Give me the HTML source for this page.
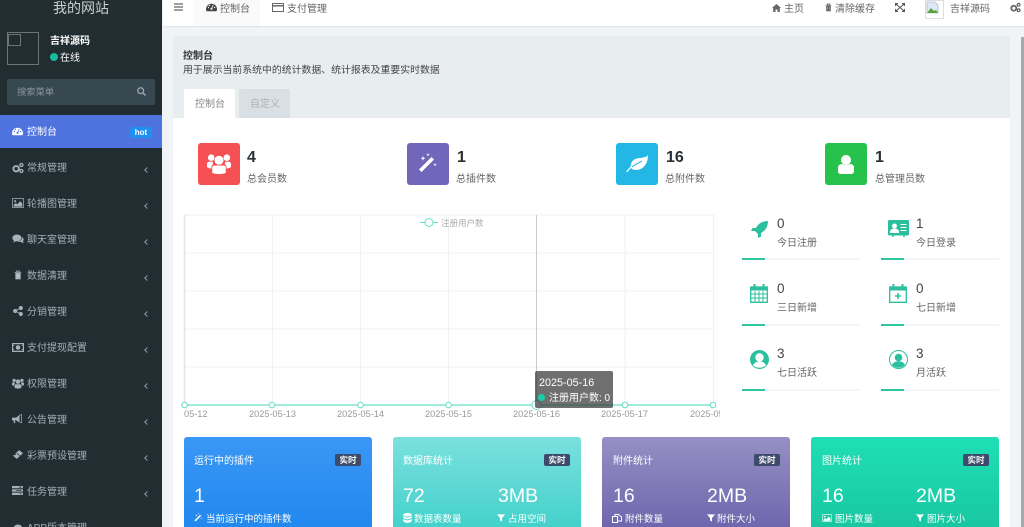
<!DOCTYPE html>
<html lang="zh-CN"><head><meta charset="utf-8"><title>控制台</title>
<style>
html,body{margin:0;padding:0;width:1024px;height:527px;overflow:hidden;background:#f1f4f6;font-family:"Liberation Sans","Noto Sans CJK SC",sans-serif;font-size:10px}
#root{position:relative;width:1024px;height:527px;overflow:hidden;background:#f1f4f6}
.a,.t{position:absolute}
.t{line-height:14px;white-space:nowrap;margin-top:2px}
.num{margin-top:1px}
svg{position:absolute;overflow:visible}
.m{color:#9fb0b8;left:27px;font-size:10px}
.ar{position:absolute;left:145px;width:3px;height:3px;border-left:1px solid #8a9aa2;border-bottom:1px solid #8a9aa2;transform:rotate(45deg)}
.nav{color:#666;font-size:10px}
.card{position:absolute;top:437px;height:100px;border-radius:3px;box-sizing:border-box;color:#fff}
.badge{position:absolute;top:454px;width:26px;height:12px;border-radius:2px;background:#3c4a6b;color:#fff;font-size:8.5px;font-weight:bold;line-height:12px;text-align:center}
.w{color:#fff}.big{font-size:19.5px;line-height:22px;color:#fff;margin-top:1px}
.l{color:#666}.n{color:#444;font-size:13.5px;margin-top:1px}
.hr{position:absolute;height:2px;background:#f5f6f7}.hr i{position:absolute;left:0;top:0;width:23px;height:2px;background:#2ec4a0}
</style></head><body>
<div id="root">
<svg width="0" height="0" style="position:absolute"><defs>
<symbol id="gauge" viewBox="0 3 16 12"><path d="M0 11.500A8 8 0 0 1 16 11.500C16 13 15.500 14 15 14.500H1C.5 14 0 13 0 11.500Z" fill="currentColor"/><path d="M8 11L10.500 5.500" stroke="#fafafa" stroke-width="1.200"/><circle cx="8" cy="11" r="1.500" fill="#fafafa"/><circle cx="3.500" cy="9" r="1" fill="#fafafa"/><circle cx="5" cy="6" r="1" fill="#fafafa"/><circle cx="12.500" cy="9" r="1" fill="#fafafa"/></symbol>
<symbol id="gauge2" viewBox="0 3 16 12"><path d="M0 11.500A8 8 0 0 1 16 11.500C16 13 15.500 14 15 14.500H1C.5 14 0 13 0 11.500Z" fill="currentColor"/><path d="M8 11L10.500 5.500" stroke="#4e73df" stroke-width="1.200"/><circle cx="8" cy="11" r="1.500" fill="#4e73df"/><circle cx="3.500" cy="9" r="1" fill="#4e73df"/><circle cx="5" cy="6" r="1" fill="#4e73df"/><circle cx="12.500" cy="9" r="1" fill="#4e73df"/></symbol>
<symbol id="cogs" viewBox="0 0 16 16"><circle cx="5.500" cy="9" r="3.600" fill="none" stroke="currentColor" stroke-width="2.600"/><circle cx="12.500" cy="4" r="2" fill="none" stroke="currentColor" stroke-width="1.800"/><circle cx="12.500" cy="12" r="2" fill="none" stroke="currentColor" stroke-width="1.800"/></symbol>
<symbol id="img" viewBox="0 0 16 14"><path d="M.5.500h15v13H.5z" fill="none" stroke="currentColor"/><circle cx="4" cy="4.500" r="1.500" fill="currentColor"/><path d="M2 12V9.500L5 7l2 2 4-4.500 3 3V12z" fill="currentColor"/></symbol>
<symbol id="chat" viewBox="0 0 16 14"><ellipse cx="6.500" cy="5.500" rx="6.500" ry="4.800" fill="currentColor"/><path d="M2.500 8L1.500 12 6 9.500z" fill="currentColor"/><path d="M14 4.500c2 1 2.500 3.500 1 5.200L15.800 13 12 11c-2 .5-3.500 0-4.500-.5 3 0 6.500-2 6.500-6z" fill="currentColor"/></symbol>
<symbol id="trash" viewBox="0 0 12 14"><path d="M1 3h10M4 3V1h4v2" fill="none" stroke="currentColor" stroke-width="1.300"/><path d="M2 4h8v9.500H2z" fill="currentColor"/><path d="M4.500 6v5M7.500 6v5" stroke="#fff" stroke-opacity=".5"/></symbol>
<symbol id="share" viewBox="0 0 14 14"><circle cx="3" cy="7" r="2.800" fill="currentColor"/><circle cx="11" cy="2.800" r="2.800" fill="currentColor"/><circle cx="11" cy="11.200" r="2.800" fill="currentColor"/><path d="M3 7l8-4.200M3 7l8 4.200" stroke="currentColor" stroke-width="1.300"/></symbol>
<symbol id="money" viewBox="0 0 16 12"><path d="M.8.800h14.400v10.400H.8z" fill="none" stroke="currentColor" stroke-width="1.600"/><circle cx="8" cy="6" r="3" fill="currentColor"/><path d="M1 3.500h2M13 3.500h2M1 8.500h2M13 8.500h2" stroke="currentColor"/></symbol>
<symbol id="users" viewBox="0 0 16 14"><circle cx="8" cy="4.500" r="3" fill="currentColor"/><circle cx="2.800" cy="2.800" r="2.200" fill="currentColor"/><circle cx="13.200" cy="2.800" r="2.200" fill="currentColor"/><path d="M3.500 13V9.500Q3.500 8 5 8h6q1.500 0 1.500 1.500V13Q8 14.500 3.500 13z" fill="currentColor"/><path d="M0 9V7q0-1.500 1.500-1.500h2.200Q4.500 7 3 8.500V10Q1 10 0 9zM16 9V7q0-1.500-1.500-1.500h-2.200Q11.500 7 13 8.500V10q2 0 3-1z" fill="currentColor"/></symbol>
<symbol id="horn" viewBox="0 0 16 14"><path d="M0 5h6l5-4v11L6 9H4l1 4H3L2 9H0z" fill="currentColor"/><path d="M11 1.500l3-1v12l-3-1" fill="none" stroke="currentColor"/></symbol>
<symbol id="ticket" viewBox="0 0 16 14"><path d="M10 0l6 5-10 9-6-5 1.500-1.500q1.500 1 2.500 0t0-2.500z" fill="currentColor"/><path d="M6 5l5 4" stroke="#222d32" stroke-width="1.200"/></symbol>
<symbol id="tasks" viewBox="0 0 16 13"><path d="M0 0h16v3.300H0zM0 4.800h16v3.300H0zM0 9.600h16V13H0z" fill="currentColor"/><path d="M10 1.600h4M6 6.400h8M11 11.300h3" stroke="#222d32"/></symbol>
<symbol id="funnel" viewBox="0 0 12 12"><path d="M0 .5h12L7.500 6v5.500l-3-2V6z" fill="currentColor"/></symbol>
<symbol id="wand" viewBox="0 0 20 20"><path d="M1 16.500L13.500 4l2.500 2.500L3.500 19z" fill="currentColor"/><path d="M5 3l.7 1.600L7.300 5.300 5.700 6 5 7.600 4.300 6 2.700 5.300 4.300 4.600zM10 0l.5 1.200 1.200.5-1.200.5L10 3.400 9.500 2.200 8.300 1.700 9.500 1.200zM17 10l.5 1.200 1.200.5-1.200.5-.5 1.200-.5-1.200-1.200-.5 1.200-.5z" fill="currentColor"/></symbol>
<symbol id="db" viewBox="0 0 12 14"><ellipse cx="6" cy="2.500" rx="6" ry="2.500" fill="currentColor"/><path d="M0 4q3 2.400 6 2.400T12 4v2.500Q9 9 6 9T0 6.500zM0 8q3 2.400 6 2.400T12 8v3.500Q9 14 6 14T0 11.500z" fill="currentColor"/></symbol>
</defs></svg>

<!-- sidebar -->
<div class="a" style="left:0;top:0;width:162px;height:527px;background:#222d32"></div>
<div class="t" style="left:53px;top:-1px;color:#c8d0d4;font-size:14px">我的网站</div>
<div class="a" style="left:7px;top:32px;width:30px;height:31px;border:1px solid #6d7477"></div>
<div class="a" style="left:8px;top:34px;width:11px;height:10px;border:1px solid #6d7477"></div>
<div class="t" style="left:50px;top:32px;color:#fff;font-weight:bold;margin-top:3px">吉祥源码</div>
<div class="a" style="left:50px;top:53px;width:8px;height:8px;border-radius:50%;background:#18bc9c"></div>
<div class="t" style="left:60px;top:49px;color:#fff;margin-top:3px">在线</div>
<div class="a" style="left:7px;top:79px;width:148px;height:26px;border-radius:2px;background:#374850"></div>
<div class="t" style="left:17px;top:83px;color:#8a979d;font-size:9.300px">搜索菜单</div>
<svg style="left:137px;top:87px;color:#9aa6ab" width="9" height="9" viewBox="0 0 9 9"><circle cx="3.700" cy="3.700" r="2.900" fill="none" stroke="currentColor" stroke-width="1.300"/><path d="M6 6l2.500 2.500" stroke="currentColor" stroke-width="1.500"/></svg>
<div class="a" style="left:0;top:115px;width:162px;height:33px;background:#4e73df"></div>
<svg style="left:12px;top:127px;color:#fff" width="11" height="9"><use href="#gauge2"/></svg>
<div class="t" style="left:27px;top:122px;margin-top:4px;color:#fff">控制台</div>
<div class="a" style="left:130px;top:127px;width:22px;height:11px;border-radius:2px;background:#1e90f0;color:#fff;font-size:8px;font-weight:bold;line-height:11px;text-align:center">hot</div>

<svg style="left:12px;top:162px;color:#a3b3ba" width="12" height="12"><use href="#cogs"/></svg><div class="t m" style="top:160px">常规管理</div><i class="ar" style="top:168px"></i>
<svg style="left:12px;top:198px;color:#a3b3ba" width="12" height="10"><use href="#img"/></svg><div class="t m" style="top:196px">轮播图管理</div><i class="ar" style="top:204px"></i>
<svg style="left:12px;top:234px;color:#a3b3ba" width="12" height="10"><use href="#chat"/></svg><div class="t m" style="top:232px">聊天室管理</div><i class="ar" style="top:240px"></i>
<svg style="left:14px;top:270px;color:#a3b3ba" width="8" height="10"><use href="#trash"/></svg><div class="t m" style="top:268px">数据清理</div><i class="ar" style="top:276px"></i>
<svg style="left:13px;top:306px;color:#a3b3ba" width="10" height="10"><use href="#share"/></svg><div class="t m" style="top:304px">分销管理</div><i class="ar" style="top:312px"></i>
<svg style="left:12px;top:343px;color:#a3b3ba" width="12" height="9"><use href="#money"/></svg><div class="t m" style="top:340px">支付提现配置</div><i class="ar" style="top:348px"></i>
<svg style="left:12px;top:378px;color:#a3b3ba" width="12" height="11"><use href="#users"/></svg><div class="t m" style="top:376px">权限管理</div><i class="ar" style="top:384px"></i>
<svg style="left:12px;top:414px;color:#a3b3ba" width="11" height="10"><use href="#horn"/></svg><div class="t m" style="top:412px">公告管理</div><i class="ar" style="top:420px"></i>
<svg style="left:13px;top:450px;color:#a3b3ba" width="10" height="9"><use href="#ticket"/></svg><div class="t m" style="top:448px">彩票预设管理</div><i class="ar" style="top:456px"></i>
<svg style="left:12px;top:486px;color:#a3b3ba" width="11" height="9"><use href="#tasks"/></svg><div class="t m" style="top:484px">任务管理</div><i class="ar" style="top:492px"></i>
<svg style="left:13px;top:524px;color:#a3b3ba" width="10" height="9"><ellipse cx="5" cy="3.500" rx="4" ry="3" fill="currentColor"/></svg><div class="t m" style="top:520px">APP版本管理</div>

<!-- top bar -->
<div class="a" style="left:163px;top:0;width:861px;height:26px;background:#fff;box-shadow:0 1px 1px #dfe3e6"></div>
<svg style="left:174px;top:3px;color:#666" width="9" height="8"><path d="M0 1h9M0 4h9M0 7h9" stroke="currentColor" stroke-width="1.300"/></svg>
<div class="a" style="left:194px;top:0;width:66px;height:26px;background:#fafafa"></div>
<svg style="left:206px;top:3px;color:#444" width="11" height="9"><use href="#gauge"/></svg>
<div class="t nav" style="left:220px;top:-2px;margin-top:5px">控制台</div>
<svg style="left:272px;top:3px;color:#666" width="12" height="9" viewBox="0 0 12 9"><path d="M.5.500h11v8H.5z" fill="none" stroke="currentColor"/><path d="M.5 2.800h11" stroke="currentColor" stroke-width="1.500"/></svg>
<div class="t nav" style="left:287px;top:1px">支付管理</div>
<svg style="left:772px;top:4px;color:#666" width="9" height="8" viewBox="0 0 9 8"><path d="M4.500 0L9 4H7.800v4H5.500V5.500h-2V8H1.200V4H0z" fill="currentColor"/></svg>
<div class="t nav" style="left:784px;top:1px">主页</div>
<svg style="left:825px;top:3px;color:#666" width="7" height="9"><use href="#trash"/></svg>
<div class="t nav" style="left:835px;top:1px">清除缓存</div>
<svg style="left:895px;top:3px;color:#555" width="10" height="9" viewBox="0 0 10 9"><path d="M0 0h3.500L0 3.500zM10 0H6.500L10 3.500zM0 9h3.500L0 5.500zM10 9H6.500L10 5.500z" fill="currentColor"/><path d="M1 1l8 7M9 1L1 8" stroke="currentColor"/></svg>
<div class="a" style="left:925px;top:0;width:17px;height:17px;border:1px solid #ddd;background:#fff"></div>
<svg style="left:926px;top:1px" width="13" height="13" viewBox="0 0 13 13"><path d="M1 1h8l3 3v8H1z" fill="#dfe8f5" stroke="#9aa8c0" stroke-width=".6"/><path d="M1 12l4-5 3 3 2-1 2 3z" fill="#5aa33c"/></svg>
<div class="t nav" style="left:950px;top:1px">吉祥源码</div>
<svg style="left:1010px;top:2px;color:#666" width="11" height="11"><use href="#cogs"/></svg>

<!-- scrollbar -->
<div class="a" style="left:1021px;top:37px;width:3px;height:490px;background:#a9a9a9"></div>

<!-- panel -->
<div class="a" style="left:173px;top:36px;width:837px;height:491px;background:#fff"></div>
<div class="a" style="left:173px;top:36px;width:837px;height:82px;background:#e8edf0"></div>
<div class="t" style="left:183px;top:48px;color:#333;font-weight:bold">控制台</div>
<div class="t" style="left:183px;top:62px;color:#444;font-size:9.900px">用于展示当前系统中的统计数据、统计报表及重要实时数据</div>
<div class="a" style="left:184px;top:89px;width:51px;height:29px;background:#fff;border-radius:2px 2px 0 0"></div>
<div class="t" style="left:195px;top:96px;color:#888">控制台</div>
<div class="a" style="left:239px;top:89px;width:51px;height:29px;background:#d8dfe5;border-radius:2px 2px 0 0"></div>
<div class="t" style="left:250px;top:96px;color:#aab2b8">自定义</div>

<!-- stats -->
<div class="a" style="left:198px;top:143px;width:42px;height:42px;border-radius:3px;background:#f55054"></div>
<svg style="left:207px;top:153px;color:#fff" width="24" height="22"><use href="#users"/></svg>
<div class="t num" style="left:247px;top:149px;margin-top:2px;color:#2a2f33;font-size:16px;font-weight:bold">4</div>
<div class="t" style="left:247px;top:171px;color:#666">总会员数</div>

<div class="a" style="left:407px;top:143px;width:42px;height:42px;border-radius:3px;background:#7266ba"></div>
<svg style="left:418px;top:153px;color:#fff" width="20" height="20"><use href="#wand"/></svg>
<div class="t num" style="left:457px;top:149px;margin-top:2px;color:#2a2f33;font-size:16px;font-weight:bold">1</div>
<div class="t" style="left:456px;top:171px;color:#666">总插件数</div>

<div class="a" style="left:616px;top:143px;width:42px;height:42px;border-radius:3px;background:#23b7e5"></div>
<svg style="left:626px;top:154px" width="23" height="18" viewBox="0 0 23 18"><path d="M5 14C4 10 6 5.500 11 4.500 15 3.500 20 4 22 1 22 10 17 16 10 16 8 16 6.500 15.500 5 14z" fill="#fff"/><path d="M1 17.500C5 12 10 9 16 7" fill="none" stroke="#fff" stroke-width="1.300" stroke-linecap="round"/><path d="M6 13C9 10.500 12 9 16 7" fill="none" stroke="#23b7e5" stroke-width="1"/></svg>
<div class="t num" style="left:666px;top:149px;margin-top:2px;color:#2a2f33;font-size:16px;font-weight:bold">16</div>
<div class="t" style="left:665px;top:171px;color:#666">总附件数</div>

<div class="a" style="left:825px;top:143px;width:42px;height:42px;border-radius:3px;background:#27c24c"></div>
<svg style="left:838px;top:155px" width="16" height="19" viewBox="0 0 16 19"><circle cx="8" cy="5" r="5" fill="#fff"/><path d="M0 16v-3q0-4 4-4 4 2 8 0 4 0 4 4v3q0 3-3 3H3q-3 0-3-3z" fill="#fff"/></svg>
<div class="t num" style="left:875px;top:149px;margin-top:2px;color:#2a2f33;font-size:16px;font-weight:bold">1</div>
<div class="t" style="left:875px;top:171px;color:#666">总管理员数</div>

<!-- chart -->
<svg style="left:0;top:0" width="1024" height="527">
<g stroke="#f0f0f0" stroke-width="1" shape-rendering="crispEdges">
<path d="M184 215H714M184 253H714M184 291H714M184 329H714M184 367H714"/>
<path d="M272.500 215V405M360.500 215V405M448.500 215V405M625 215V405M713.500 215V405"/>
</g>
<path d="M184.500 215V405" stroke="#e4e4e4" stroke-width="1.500"/>
<path d="M536.500 215V405" stroke="#ccc"/>
<path d="M184 405H713" stroke="#66e0c6" stroke-width="1.300"/>
<g fill="#fff" stroke="#66e0c6" stroke-width="1">
<circle cx="184.500" cy="405" r="2.800"/><circle cx="272" cy="405" r="2.800"/><circle cx="360.500" cy="405" r="2.800"/><circle cx="448.500" cy="405" r="2.800"/><circle cx="536.500" cy="405" r="4.500"/><circle cx="625" cy="405" r="2.800"/><circle cx="713" cy="405" r="2.800"/>
</g>
<path d="M420 222.500H438" stroke="#66e0c6"/><circle cx="429" cy="222.500" r="4" fill="#fff" stroke="#66e0c6"/>
</svg>
<div class="t" style="left:441px;top:214px;color:#aaa;font-size:8.500px">注册用户数</div>
<div class="a" style="left:184px;top:407px;width:536px;height:14px;overflow:hidden;white-space:nowrap;color:#999;font-size:9.200px;line-height:14px">
<span class="a" style="left:0">05-12</span><span class="a" style="left:65px">2025-05-13</span><span class="a" style="left:153px">2025-05-14</span><span class="a" style="left:241px">2025-05-15</span><span class="a" style="left:329px">2025-05-16</span><span class="a" style="left:417px">2025-05-17</span><span class="a" style="left:506px">2025-05-18</span>
</div>
<div class="a" style="left:535px;top:371px;width:78px;height:37px;border-radius:2px;background:rgba(50,50,50,.7)"></div>
<div class="t num" style="left:539px;top:375px;color:#fff;font-size:10.800px">2025-05-16</div>
<div class="a" style="left:538px;top:394px;width:7px;height:7px;border-radius:50%;background:#18d0a8"></div>
<div class="t" style="left:549px;top:390px;color:#fff;font-size:10px">注册用户数: 0</div>

<!-- right stats -->
<svg style="left:751px;top:221px;color:#2bbf9e" width="17" height="17" viewBox="0 0 17 17"><path d="M17 0C11 0 7 3 5 7H1.500L0 10h4l3 3v4l3-1.500V12c4-2 7-6 7-12z" fill="currentColor"/></svg>
<div class="t n" style="left:777px;top:216px">0</div><div class="t l" style="left:777px;top:235px">今日注册</div>
<div class="hr" style="left:742px;top:258px;width:118px"><i></i></div>

<svg style="left:888px;top:220px;color:#2bbf9e" width="21" height="17" viewBox="0 0 21 17"><rect width="21" height="15.500" rx="1.500" fill="currentColor"/><circle cx="6.500" cy="6" r="2.500" fill="#fff"/><path d="M2.500 12.500q0-3.500 4-3.500t4 3.500zM12.500 4.500h6M12.500 7.500h6M12.500 10.500h6" fill="#fff" stroke="#fff"/><path d="M5 15.500v1.500M16 15.500v1.500" stroke="currentColor" stroke-width="1.500"/></svg>
<div class="t n" style="left:916px;top:216px">1</div><div class="t l" style="left:916px;top:235px">今日登录</div>
<div class="hr" style="left:881px;top:258px;width:118px"><i></i></div>

<svg style="left:750px;top:284px;color:#2bbf9e" width="18" height="19" viewBox="0 0 18 19"><path d="M.7 3h16.600v15.300H.7z" fill="none" stroke="currentColor" stroke-width="1.300"/><path d="M.7 3h16.600v3.500H.7z" fill="currentColor"/><path d="M1 10h16M1 14h16M5 7v11M9 7v11M13 7v11" stroke="currentColor"/><path d="M4.500 0v4M13.500 0v4" stroke="currentColor" stroke-width="2"/></svg>
<div class="t n" style="left:777px;top:281px">0</div><div class="t l" style="left:777px;top:300px">三日新增</div>
<div class="hr" style="left:742px;top:324px;width:118px"><i></i></div>

<svg style="left:889px;top:284px;color:#2bbf9e" width="18" height="19" viewBox="0 0 18 19"><path d="M.7 3h16.600v15.300H.7z" fill="none" stroke="currentColor" stroke-width="1.300"/><path d="M.7 3h16.600v3.500H.7z" fill="currentColor"/><path d="M9 9v6M6 12h6" stroke="currentColor" stroke-width="1.500"/><path d="M4.500 0v4M13.500 0v4" stroke="currentColor" stroke-width="2"/></svg>
<div class="t n" style="left:916px;top:281px">0</div><div class="t l" style="left:916px;top:300px">七日新增</div>
<div class="hr" style="left:881px;top:324px;width:118px"><i></i></div>

<svg style="left:750px;top:350px" width="19" height="19" viewBox="0 0 19 19"><circle cx="9.500" cy="9.500" r="9.500" fill="#2bbf9e"/><circle cx="9.500" cy="7.500" r="4.200" fill="#fff"/><path d="M3 15.500q1.500-4 6.500-4t6.500 4q-6.500 4.500-13 0z" fill="#fff"/></svg>
<div class="t n" style="left:777px;top:346px">3</div><div class="t l" style="left:777px;top:365px">七日活跃</div>
<div class="hr" style="left:742px;top:389px;width:118px"><i></i></div>

<svg style="left:889px;top:350px" width="19" height="19" viewBox="0 0 19 19"><circle cx="9.500" cy="9.500" r="9" fill="#fff" stroke="#2bbf9e"/><circle cx="9.500" cy="7.500" r="3.800" fill="#2bbf9e"/><path d="M3 15q1.500-3.800 6.500-3.800T16 15q-6.500 5.500-13 0z" fill="#2bbf9e"/></svg>
<div class="t n" style="left:916px;top:346px">3</div><div class="t l" style="left:916px;top:365px">月活跃</div>
<div class="hr" style="left:881px;top:389px;width:118px"><i></i></div>

<!-- cards -->
<div class="card" style="left:184px;width:188px;background:linear-gradient(#3a97f5,#1f87ee)"></div>
<div class="card" style="left:393px;width:188px;background:linear-gradient(#7be0df,#3fd0c9)"></div>
<div class="card" style="left:602px;width:188px;background:linear-gradient(#9590c4,#6a62ab)"></div>
<div class="card" style="left:811px;width:188px;background:linear-gradient(#1fdfb5,#18c5a0)"></div>

<div class="t w" style="left:194px;top:453px">运行中的插件</div><div class="badge" style="left:335px">实时</div>
<div class="t big" style="left:194px;top:484px">1</div>
<svg style="left:194px;top:513px;color:#fff" width="9" height="9"><use href="#wand"/></svg>
<div class="t w" style="left:206px;top:511px;font-size:9.500px">当前运行中的插件数</div>

<div class="t w" style="left:403px;top:453px">数据库统计</div><div class="badge" style="left:544px">实时</div>
<div class="t big" style="left:403px;top:484px">72</div><div class="t big" style="left:498px;top:484px">3MB</div>
<svg style="left:403px;top:513px;color:#fff" width="9" height="10"><use href="#db"/></svg>
<div class="t w" style="left:414px;top:511px;font-size:9.500px">数据表数量</div>
<svg style="left:497px;top:514px;color:#fff" width="8" height="8"><use href="#funnel"/></svg>
<div class="t w" style="left:508px;top:511px;font-size:9.500px">占用空间</div>

<div class="t w" style="left:613px;top:453px">附件统计</div><div class="badge" style="left:754px">实时</div>
<div class="t big" style="left:613px;top:484px">16</div><div class="t big" style="left:707px;top:484px">2MB</div>
<svg style="left:612px;top:514px;color:#fff" width="10" height="9" viewBox="0 0 10 9"><path d="M.5 2.500h5v6h-5zM3 2.500V.5h3.500L9.500 3v4h-4" fill="none" stroke="currentColor"/></svg>
<div class="t w" style="left:625px;top:511px;font-size:9.500px">附件数量</div>
<svg style="left:707px;top:514px;color:#fff" width="8" height="8"><use href="#funnel"/></svg>
<div class="t w" style="left:717px;top:511px;font-size:9.500px">附件大小</div>

<div class="t w" style="left:822px;top:453px">图片统计</div><div class="badge" style="left:963px">实时</div>
<div class="t big" style="left:822px;top:484px">16</div><div class="t big" style="left:916px;top:484px">2MB</div>
<svg style="left:822px;top:514px;color:#fff" width="10" height="8"><use href="#img"/></svg>
<div class="t w" style="left:835px;top:511px;font-size:9.500px">图片数量</div>
<svg style="left:916px;top:514px;color:#fff" width="8" height="8"><use href="#funnel"/></svg>
<div class="t w" style="left:927px;top:511px;font-size:9.500px">图片大小</div>
</div>
</body></html>
